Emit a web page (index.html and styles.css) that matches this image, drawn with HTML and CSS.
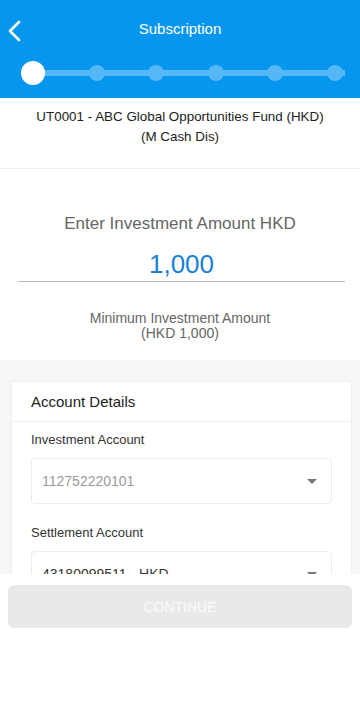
FILE: index.html
```html
<!DOCTYPE html>
<html lang="en">
<head>
<meta charset="utf-8">
<meta name="viewport" content="width=device-width, initial-scale=1">
<title>Subscription</title>
<link rel="stylesheet" href="styles.css">
</head>
<body>
<div class="page">
  <header class="appbar">
    <div class="topbar">
      <button class="back" aria-label="Back">
        <svg width="14" height="22" viewBox="0 0 14 22"><polyline points="12,2 3,11 12,20" fill="none" stroke="#fff" stroke-width="2.6" stroke-linecap="round" stroke-linejoin="round"/></svg>
      </button>
      <h1 class="title">Subscription</h1>
    </div>
    <div class="stepper">
      <span class="step current"></span>
      <span class="step"></span>
      <span class="step"></span>
      <span class="step"></span>
      <span class="step"></span>
      <span class="step"></span>
    </div>
  </header>

  <main class="content">
    <section class="fund">
      <p>UT0001 - ABC Global Opportunities Fund (HKD)<br>(M Cash Dis)</p>
    </section>

    <section class="amount">
      <p class="amount-label">Enter Investment Amount HKD</p>
      <div class="amount-value">1,000</div>
      <p class="amount-min">Minimum Investment Amount<br>(HKD 1,000)</p>
    </section>

    <section class="details">
      <div class="card">
        <div class="card-head">Account Details</div>
        <div class="card-body">
          <label class="field-label">Investment Account</label>
          <div class="select disabled">
            <span>112752220101</span>
            <span class="caret"></span>
          </div>
          <label class="field-label">Settlement Account</label>
          <div class="select">
            <span>43180099511 - HKD</span>
            <span class="caret"></span>
          </div>
        </div>
      </div>
    </section>
  </main>

  <footer class="footer">
    <button class="continue" disabled>CONTINUE</button>
  </footer>
</div>
</body>
</html>
```

FILE: styles.css
```css
* { box-sizing: border-box; }
html, body { margin: 0; padding: 0; }
body {
  font-family: "Liberation Sans", Arial, Helvetica, sans-serif;
  background: #fff;
  color: #222;
}
.page {
  height: 100vh;
  display: flex;
  flex-direction: column;
  overflow: hidden;
}
.appbar {
  background: #0796ee;
  padding-bottom: 8px;
  flex-shrink: 0;
}
.topbar {
  height: 56px;
  display: flex;
  align-items: center;
  justify-content: center;
  position: relative;
}
.back {
  position: absolute;
  left: 7px;
  top: 20px;
  width: 16px;
  height: 24px;
  padding: 0;
  border: 0;
  background: none;
  display: flex;
}
.title {
  margin: 0;
  font-size: 15px;
  font-weight: normal;
  color: #fff;
}
.stepper {
  height: 34px;
  display: flex;
  align-items: center;
  justify-content: space-between;
  padding: 0 17px 0 21px;
  position: relative;
}
.stepper::before {
  content: "";
  position: absolute;
  left: 22px;
  right: 15px;
  top: 14px;
  height: 6px;
  background: #55b7f5;
}
.step {
  width: 16px;
  height: 16px;
  border-radius: 50%;
  background: #55b7f5;
  position: relative;
}
.step.current {
  width: 24px;
  height: 24px;
  background: #fff;
}
.content {
  flex: 1;
  overflow: hidden;
}
.fund {
  padding: 9px 8px 21px;
  border-bottom: 1px solid #eeeeee;
}
.fund p {
  margin: 0;
  text-align: center;
  font-size: 13.4px;
  line-height: 20px;
  color: #222;
}
.amount {
  height: 191px;
  padding-top: 44px;
  display: flex;
  flex-direction: column;
  align-items: center;
}
.amount-label {
  margin: 0;
  font-size: 17px;
  line-height: 22px;
  color: #666;
}
.amount-value {
  align-self: stretch;
  margin: 12px 15px 0 18px;
  text-align: center;
  font-size: 26px;
  line-height: 34px;
  color: #1a7fd6;
  border-bottom: 1px solid #bcbcbc;
}
.amount-min {
  margin: 29px 0 0;
  text-align: center;
  font-size: 14px;
  line-height: 15px;
  color: #666;
}
.details {
  background: #f6f6f6;
  padding: 21px 8px 0 11px;
}
.card {
  background: #fff;
  border: 1px solid #efefef;
  border-bottom: 0;
}
.card-head {
  height: 40px;
  display: flex;
  align-items: center;
  padding-left: 19px;
  font-size: 15px;
  color: #222;
  border-bottom: 1px solid #eeeeee;
}
.card-body {
  padding: 9px 19px 20px 19px;
  display: flex;
  flex-direction: column;
}
.field-label {
  font-size: 13px;
  line-height: 18px;
  color: #333;
  margin-bottom: 9px;
}
.select {
  height: 46px;
  border: 1px solid #ececec;
  border-radius: 4px;
  display: flex;
  align-items: center;
  justify-content: space-between;
  padding: 0 14px 0 10px;
  font-size: 14px;
  color: #333;
  margin-bottom: 20px;
}
.select.disabled { color: #9a9a9a; }
.caret {
  width: 0;
  height: 0;
  border-left: 5px solid transparent;
  border-right: 5px solid transparent;
  border-top: 5px solid #777;
}
.footer {
  height: 143px;
  flex-shrink: 0;
  background: #fff;
  padding: 11px 8px 0;
}
.continue {
  width: 100%;
  height: 43px;
  border: 0;
  border-radius: 6px;
  background: #e9e9e9;
  color: #fbfbfb;
  font-family: inherit;
  font-size: 14px;
}
```
